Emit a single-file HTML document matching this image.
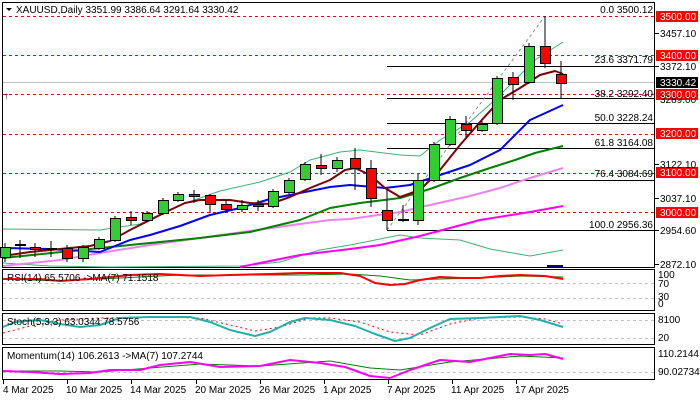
<!DOCTYPE html>
<html><head><meta charset="utf-8"><style>
body{margin:0;background:#fff;width:700px;height:400px;overflow:hidden}
svg{display:block}
text{font-family:"Liberation Sans",sans-serif;font-size:10px;fill:#000}
</style></head><body>
<svg width="700" height="400" viewBox="0 0 700 400" xmlns="http://www.w3.org/2000/svg">
<rect width="700" height="400" fill="#fff"/>
<!-- panel borders -->
<g fill="none" stroke="#000" stroke-width="1">
<rect x="2.5" y="2.5" width="652" height="265"/>
<rect x="2.5" y="269.5" width="652" height="41"/>
<rect x="2.5" y="313.5" width="652" height="31"/>
<rect x="2.5" y="347.5" width="652" height="32"/>
</g>
<!-- red dashed levels -->
<g stroke="#f00" stroke-dasharray="3,3" stroke-width="1">
<line x1="3" y1="16.5" x2="654" y2="16.5"/>
<line x1="3" y1="55.5" x2="654" y2="55.5"/>
<line x1="3" y1="94.5" x2="654" y2="94.5"/>
<line x1="3" y1="134.5" x2="654" y2="134.5"/>
<line x1="3" y1="173.5" x2="654" y2="173.5"/>
<line x1="3" y1="212.5" x2="654" y2="212.5"/>
</g>
<line x1="3" y1="82.5" x2="654" y2="82.5" stroke="#c0c0c0"/>
<!-- fib lines -->
<g stroke="#000" stroke-width="1">
<line x1="387" y1="66.5" x2="654" y2="66.5"/>
<line x1="387" y1="98.5" x2="654" y2="98.5"/>
<line x1="387" y1="123.5" x2="654" y2="123.5"/>
<line x1="387" y1="148.5" x2="654" y2="148.5"/>
<line x1="387" y1="180.5" x2="654" y2="180.5"/>
<line x1="387" y1="230.5" x2="654" y2="230.5"/>
</g>
<line x1="387" y1="230" x2="545" y2="16" stroke="#8c8c8c" stroke-dasharray="3,3"/>
<g text-anchor="end">
<text x="653" y="13">0.0 3500.12</text>
<text x="653" y="63">23.6 3371.79</text>
<text x="653" y="97">38.2 3292.40</text>
<text x="653" y="121">50.0 3228.24</text>
<text x="653" y="146">61.8 3164.08</text>
<text x="653" y="177">76.4 3084.69</text>
<text x="653" y="228">100.0 2956.36</text>
</g>
<!-- MAs -->
<g fill="none" stroke-linejoin="round">
<polyline stroke="#3cb371" stroke-width="1" points="3,229 100,230 140,224 180,205 220,191 260,182 290,172 310,160 340,152 360,150 400,155 420,156 440,140 470,122 495,100 515,80 535,60 563,42"/>
<polyline stroke="#3cb371" stroke-width="1" points="3,263 50,266 110,267 240,266 280,262 320,250 350,245 400,235 420,238 460,240 490,249 530,256 563,250"/>
<polyline stroke="#ff00ff" stroke-width="2" points="240,267 300,255 350,249 380,245 420,236 480,220 530,212 563,206"/>
<polyline stroke="#ee82ee" stroke-width="2" points="3,266 60,260 100,253 150,245 200,238 250,231 300,224 330,220 350,219 400,212 430,205 470,196 500,188 530,178 563,168"/>
<polyline stroke="#008000" stroke-width="2" points="3,258 100,248 150,243 200,238 250,232 300,220 330,208 360,203 400,198 430,189 460,178 490,168 515,160 535,153 563,146"/>
<polyline stroke="#0000ff" stroke-width="2" points="3,248 50,249 100,252 130,240 150,235 180,226 210,215 240,208 270,199 300,193 330,187 350,185 385,188 410,185 440,175 470,165 500,150 530,120 563,105"/>
<polyline stroke="#800000" stroke-width="2" points="3,256 30,252 60,249 90,246 110,241 130,230 150,220 170,210 185,203 200,200 230,200 250,203 270,204 290,197 310,188 330,180 345,170 355,168 370,175 385,188 400,197 420,190 440,170 460,145 480,122 500,100 520,88 540,75 555,71 563,74"/>
</g>
<rect x="547" y="265" width="16" height="2" fill="#000080"/>
<!-- candles -->
<g stroke="#000" stroke-width="1">
<line x1="5" y1="243" x2="5" y2="262"/><line x1="20" y1="240" x2="20" y2="258"/><line x1="35" y1="243" x2="35" y2="257"/><line x1="51" y1="241" x2="51" y2="257"/><line x1="67" y1="245" x2="67" y2="262"/><line x1="83" y1="245" x2="83" y2="262"/><line x1="99" y1="237" x2="99" y2="250"/><line x1="115" y1="216" x2="115" y2="242"/><line x1="131" y1="211" x2="131" y2="225"/><line x1="147" y1="211" x2="147" y2="222"/><line x1="163" y1="198" x2="163" y2="215"/><line x1="178" y1="192" x2="178" y2="202"/><line x1="194" y1="190" x2="194" y2="203"/><line x1="210" y1="194" x2="210" y2="213"/><line x1="226" y1="200" x2="226" y2="213"/><line x1="242" y1="200" x2="242" y2="212"/><line x1="258" y1="200" x2="258" y2="211"/><line x1="273" y1="189" x2="273" y2="208"/><line x1="289" y1="178" x2="289" y2="194"/><line x1="305" y1="162" x2="305" y2="181"/><line x1="321" y1="154" x2="321" y2="175"/><line x1="337" y1="157" x2="337" y2="172"/><line x1="355" y1="148" x2="355" y2="190"/><line x1="371" y1="160" x2="371" y2="207"/><line x1="387" y1="190" x2="387" y2="230"/><line x1="403" y1="205" x2="403" y2="222"/><line x1="418" y1="174" x2="418" y2="225"/><line x1="434" y1="142" x2="434" y2="182"/><line x1="450" y1="116" x2="450" y2="146"/><line x1="466" y1="116" x2="466" y2="137"/><line x1="482" y1="121" x2="482" y2="132"/><line x1="497" y1="76" x2="497" y2="125"/><line x1="513" y1="72" x2="513" y2="100"/><line x1="529" y1="43" x2="529" y2="84"/><line x1="545" y1="16" x2="545" y2="68"/><line x1="561" y1="61" x2="561" y2="99"/>
</g>
<g stroke="#000" stroke-width="1">
<rect x="0.5" y="247.5" width="10" height="10" fill="#32cd32"/>
<rect x="15.5" y="244.5" width="10" height="1" fill="#32cd32"/>
<rect x="30.5" y="247.5" width="10" height="2" fill="#f00"/>
<rect x="46.5" y="248.5" width="10" height="1" fill="#f00"/>
<rect x="62.5" y="248.5" width="10" height="10" fill="#f00"/>
<rect x="78.5" y="247.5" width="10" height="11" fill="#32cd32"/>
<rect x="94.5" y="239.5" width="10" height="9" fill="#32cd32"/>
<rect x="110.5" y="218.5" width="10" height="22" fill="#32cd32"/>
<rect x="126.5" y="217.5" width="10" height="3" fill="#f00"/>
<rect x="142.5" y="213.5" width="10" height="7" fill="#32cd32"/>
<rect x="158.5" y="200.5" width="10" height="13" fill="#32cd32"/>
<rect x="173.5" y="194.5" width="10" height="6" fill="#32cd32"/>
<rect x="189.5" y="194.5" width="10" height="2" fill="#f00"/>
<rect x="205.5" y="195.5" width="10" height="9" fill="#f00"/>
<rect x="221.5" y="204.5" width="10" height="5" fill="#f00"/>
<rect x="237.5" y="205.5" width="10" height="4" fill="#32cd32"/>
<rect x="253.5" y="204.5" width="10" height="2" fill="#f00"/>
<rect x="268.5" y="191.5" width="10" height="15" fill="#32cd32"/>
<rect x="284.5" y="180.5" width="10" height="12" fill="#32cd32"/>
<rect x="300.5" y="164.5" width="10" height="15" fill="#32cd32"/>
<rect x="316.5" y="165.5" width="10" height="3" fill="#f00"/>
<rect x="332.5" y="160.5" width="10" height="8" fill="#32cd32"/>
<rect x="350.5" y="158.5" width="10" height="10" fill="#f00"/>
<rect x="366.5" y="168.5" width="10" height="30" fill="#f00"/>
<rect x="382.5" y="210.5" width="10" height="10" fill="#f00"/>
<rect x="398.5" y="219.5" width="10" height="1" fill="#32cd32"/>
<rect x="413.5" y="180.5" width="10" height="40" fill="#32cd32"/>
<rect x="429.5" y="144.5" width="10" height="36" fill="#32cd32"/>
<rect x="445.5" y="119.5" width="10" height="25" fill="#32cd32"/>
<rect x="461.5" y="124.5" width="10" height="6" fill="#f00"/>
<rect x="477.5" y="124.5" width="10" height="6" fill="#32cd32"/>
<rect x="492.5" y="78.5" width="10" height="45" fill="#32cd32"/>
<rect x="508.5" y="77.5" width="10" height="7" fill="#f00"/>
<rect x="524.5" y="46.5" width="10" height="36" fill="#32cd32"/>
<rect x="540.5" y="46.5" width="10" height="17" fill="#f00"/>
<rect x="556.5" y="74.5" width="10" height="9" fill="#f00"/>
</g>
<!-- title -->
<path d="M6,8 L12,8 L9,11 Z" fill="#000"/>
<text x="16" y="13">XAUUSD,Daily  3351.99 3386.64 3291.64 3330.42</text>
<text x="4" y="99" font-size="7" fill="#c00">↑</text>
<!-- price axis -->
<g stroke="#000"><line x1="655" y1="33.5" x2="659" y2="33.5"/><line x1="655" y1="66.5" x2="659" y2="66.5"/><line x1="655" y1="164.5" x2="659" y2="164.5"/><line x1="655" y1="198.5" x2="659" y2="198.5"/><line x1="655" y1="230.5" x2="659" y2="230.5"/><line x1="655" y1="264.5" x2="659" y2="264.5"/></g>
<g fill="#f00"><rect x="656" y="11" width="42" height="11"/><rect x="656" y="50" width="42" height="11"/><rect x="656" y="89" width="42" height="11"/><rect x="656" y="128" width="42" height="11"/><rect x="656" y="167" width="42" height="11"/><rect x="656" y="207" width="42" height="11"/></g>
<rect x="656" y="77" width="42" height="11" fill="#000"/>
<g>
<text x="660" y="20" fill="#fff" style="fill:#fff">3500.00</text>
<text x="660" y="37">3457.10</text>
<text x="660" y="59" style="fill:#fff">3400.00</text>
<text x="660" y="70">3372.10</text>
<text x="660" y="86" style="fill:#fff">3330.42</text>
<text x="660" y="103">3289.00</text>
<text x="660" y="98" style="fill:#fff">3300.00</text>
<text x="660" y="137" style="fill:#fff">3200.00</text>
<text x="660" y="168">3122.10</text>
<text x="660" y="176" style="fill:#fff">3100.00</text>
<text x="660" y="202">3037.10</text>
<text x="660" y="216" style="fill:#fff">3000.00</text>
<text x="660" y="234">2954.60</text>
<text x="660" y="268">2872.10</text>
</g>
<!-- indicator levels -->
<g stroke="#c0c0c0" stroke-dasharray="3,3">
<line x1="3" y1="283.5" x2="654" y2="283.5"/><line x1="3" y1="298.5" x2="654" y2="298.5"/>
<line x1="3" y1="320.5" x2="654" y2="320.5"/><line x1="3" y1="338.5" x2="654" y2="338.5"/>
<line x1="3" y1="372.5" x2="654" y2="372.5"/>
</g>
<g fill="none" stroke-linejoin="round">
<polyline stroke="#008000" stroke-width="1" points="3,279 60,281 120,278 180,275 240,275 300,275 350,274 380,276 410,280 440,279 480,278 520,276 563,277"/>
<polyline stroke="#f00" stroke-width="2" points="3,279 40,279 60,281 90,279 110,277 130,275 160,274 200,276 230,275 270,274 300,273 340,273 360,276 375,283 390,285 405,284 420,280 440,277 460,278 480,278 500,276 520,275 545,276 563,279"/>
<polyline stroke="#f00" stroke-width="1" stroke-dasharray="2,3" points="3,333 30,326 60,320 100,318 150,317 200,318 230,325 255,331 280,327 310,318 330,318 360,322 390,332 420,335 450,324 480,318 520,317 545,319 563,324"/>
<polyline stroke="#20b2aa" stroke-width="2" points="3,327 15,322 40,320 60,324 80,327 100,325 120,318 150,317 190,317 210,322 230,330 255,336 270,332 290,322 305,318 330,320 355,326 375,334 395,341 410,338 430,328 450,319 480,318 520,316 540,320 563,327"/>
<polyline stroke="#008000" stroke-width="1" points="3,371 60,371 100,372 150,368 200,364 260,366 330,361 370,368 400,370 450,362 520,356 563,358"/>
<polyline stroke="#ff00ff" stroke-width="2" points="3,371 30,372 60,374 90,373 110,370 140,370 160,365 190,362 220,367 260,366 290,360 320,363 345,367 370,376 390,378 410,370 440,360 470,362 490,358 510,354 530,355 545,354 563,359"/>
</g>
<text x="7" y="281">RSI(14) 65.5706  -&gt;MA(7) 71.1518</text>
<text x="7" y="325">Stoch(5,3,3) 63.0344 78.5756</text>
<text x="7" y="359">Momentum(14) 106.2613  -&gt;MA(7) 107.2744</text>
<text x="658" y="278">100</text><text x="658" y="287">70</text><text x="658" y="300">30</text><text x="658" y="307">0</text>
<text x="658" y="323">8100</text><text x="658" y="341">20</text>
<text x="658" y="357">110.2144</text><text x="658" y="375">90.02734</text>
<!-- time axis -->
<g stroke="#000"><line x1="3.5" y1="380" x2="3.5" y2="384"/><line x1="67.5" y1="380" x2="67.5" y2="384"/><line x1="131.5" y1="380" x2="131.5" y2="384"/><line x1="196.5" y1="380" x2="196.5" y2="384"/><line x1="260.5" y1="380" x2="260.5" y2="384"/><line x1="324.5" y1="380" x2="324.5" y2="384"/><line x1="388.5" y1="380" x2="388.5" y2="384"/><line x1="452.5" y1="380" x2="452.5" y2="384"/><line x1="516.5" y1="380" x2="516.5" y2="384"/></g>
<text x="3" y="393">4 Mar 2025</text><text x="66" y="393">10 Mar 2025</text><text x="130" y="393">14 Mar 2025</text><text x="195" y="393">20 Mar 2025</text><text x="259" y="393">26 Mar 2025</text><text x="323" y="393">1 Apr 2025</text><text x="387" y="393">7 Apr 2025</text><text x="451" y="393">11 Apr 2025</text><text x="515" y="393">17 Apr 2025</text>
</svg>
</body></html>
